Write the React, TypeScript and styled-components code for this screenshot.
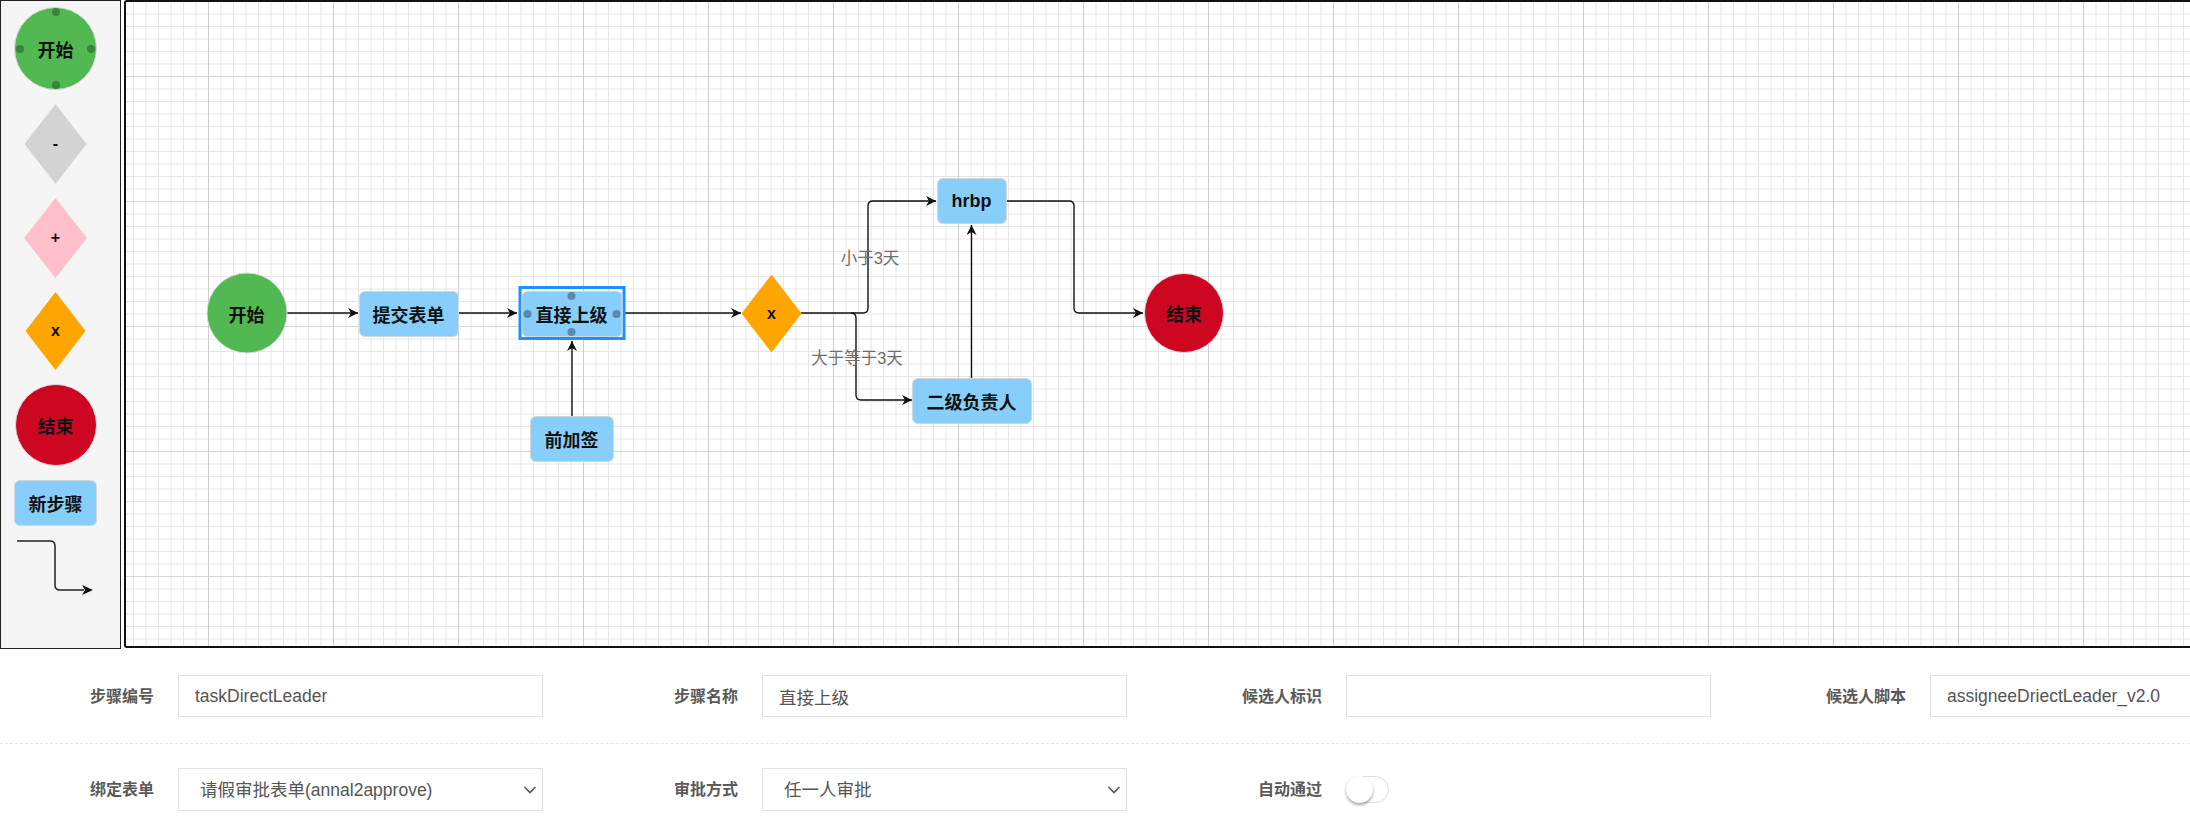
import styled, { createGlobalStyle } from "styled-components";

const GlobalStyle = createGlobalStyle`
  html, body {
    margin: 0;
    padding: 0;
    overflow: hidden;
    background: #fff;
  }
  body {
    font-family: "Liberation Sans", "Noto Sans CJK SC", sans-serif;
  }
  * {
    box-sizing: border-box;
  }
`;

// canvas padding box starts here in page coordinates
const ORIGIN_X = 126;
const ORIGIN_Y = 2;

const Page = styled.div`
  width: 2190px;
`;

const Workspace = styled.div`
  display: flex;
  gap: 3px;
  height: 649px;
  overflow: hidden;
`;

const Palette = styled.aside`
  flex: none;
  width: 121px;
  height: 649px;
  border: 1px solid #222;
  background: #f5f5f5;
  display: flex;
  flex-direction: column;
  align-items: center;
  gap: 14px;
  padding: 6px 23px 0 13px;
`;

const Canvas = styled.main`
  flex: none;
  position: relative;
  width: 2200px;
  height: 648px;
  border: 2px solid #111;
  border-radius: 3px;
  overflow: hidden;
  background-color: #fff;
  background-image: linear-gradient(to right, #cdcdcd 1px, transparent 1px),
    linear-gradient(to bottom, #d6d6d6 1px, transparent 1px),
    linear-gradient(to right, #e6e6e6 1px, transparent 1px),
    linear-gradient(to bottom, #e6e6e6 1px, transparent 1px);
  background-size: 125px 125px, 125px 125px, 12.5px 12.5px, 12.5px 12.5px;
  background-position: 82px 74px, 82px 74px, 7px 11.5px, 7px 11.5px;
`;

const Circle = styled.div<{ $color: string; $size: number }>`
  position: relative;
  flex: none;
  width: ${(p) => p.$size}px;
  height: ${(p) => p.$size}px;
  border-radius: 50%;
  background: ${(p) => p.$color};
  border: 1px solid #d8d8d8;
  display: flex;
  align-items: center;
  justify-content: center;
  font-size: 18px;
  font-weight: 700;
  color: #111;
`;

const Diamond = styled.div<{ $color: string; $w: number; $h: number }>`
  flex: none;
  width: ${(p) => p.$w}px;
  height: ${(p) => p.$h}px;
  background: ${(p) => p.$color};
  clip-path: polygon(50% 0, 100% 50%, 50% 100%, 0 50%);
  display: flex;
  align-items: center;
  justify-content: center;
  font-size: 16px;
  font-weight: 700;
  color: #111;
`;

const Step = styled.div`
  position: relative;
  flex: none;
  height: 46px;
  padding: 0 14px;
  border-radius: 6px;
  background: #87cefa;
  border: 1px solid #cfd8de;
  display: flex;
  align-items: center;
  justify-content: center;
  font-size: 18px;
  font-weight: 700;
  color: #111;
  white-space: nowrap;
`;

const Port = styled.span<{ $side: "top" | "bottom" | "left" | "right"; $color: string }>`
  position: absolute;
  width: 8px;
  height: 8px;
  border-radius: 50%;
  background: ${(p) => p.$color};
  ${(p) =>
    p.$side === "top"
      ? "top: 0px; left: 50%; transform: translateX(-50%);"
      : p.$side === "bottom"
      ? "bottom: 0px; left: 50%; transform: translateX(-50%);"
      : p.$side === "left"
      ? "left: 1px; top: 50%; transform: translateY(-50%);"
      : "right: 1px; top: 50%; transform: translateY(-50%);"}
`;

const Selection = styled.div`
  border: 3px solid #1e90ff;
  padding: 2px 0 0 0;
`;

const NodeSlot = styled.div<{ $x: number; $y: number }>`
  position: absolute;
  left: ${(p) => p.$x - ORIGIN_X}px;
  top: ${(p) => p.$y - ORIGIN_Y}px;
  transform: translate(-50%, -50%);
`;

const EdgeLabel = styled.div<{ $x: number; $y: number }>`
  position: absolute;
  left: ${(p) => p.$x - ORIGIN_X}px;
  top: ${(p) => p.$y - ORIGIN_Y}px;
  transform: translate(-50%, -50%);
  font-size: 16.5px;
  color: #6e6e6e;
  white-space: nowrap;
`;

const EdgeLayer = styled.svg`
  position: absolute;
  left: 0;
  top: 0;
  pointer-events: none;
`;

const Form = styled.section`
  width: 2190px;
`;

const FormRow = styled.div<{ $top: number; $bottom: number }>`
  display: grid;
  grid-template-columns: repeat(4, 584px);
  margin-left: -17px;
  padding: ${(p) => p.$top}px 0 ${(p) => p.$bottom}px;
`;

const Divider = styled.hr`
  margin: 0;
  border: none;
  border-top: 1px dashed #e6e6e6;
`;

const Field = styled.div`
  display: grid;
  grid-template-columns: 171px 365px;
  column-gap: 24px;
  align-items: center;
`;

const Label = styled.label`
  text-align: right;
  font-size: 16px;
  font-weight: 700;
  color: #5a5a5a;
  padding-bottom: 3px;
`;

const TextInput = styled.input`
  height: 42px;
  width: 100%;
  border: 1px solid #e3e3e3;
  border-radius: 0;
  padding: 0 16px;
  font-family: "Liberation Sans", "Noto Sans CJK SC", sans-serif;
  font-size: 17.5px;
  color: #555;
  outline: none;
  background: #fff;
`;

const SelectBox = styled.div`
  position: relative;
  height: 43px;
`;

const Select = styled.select`
  appearance: none;
  width: 100%;
  height: 100%;
  border: 1px solid #e3e3e3;
  border-radius: 0;
  padding: 0 30px 0 21px;
  font-family: "Liberation Sans", "Noto Sans CJK SC", sans-serif;
  font-size: 17.5px;
  color: #555;
  background: #fff;
  outline: none;
`;

const Chevron = styled.svg`
  position: absolute;
  right: 6px;
  top: 50%;
  transform: translateY(-50%);
  pointer-events: none;
`;

const Switch = styled.div`
  position: relative;
  width: 43px;
  height: 27px;
  border: 1px solid #dedede;
  border-radius: 14px;
  background: #fff;
`;

const Knob = styled.span`
  position: absolute;
  left: -1px;
  top: -1px;
  width: 27px;
  height: 27px;
  border-radius: 50%;
  background: #fff;
  box-shadow: 0 2px 3px rgba(0, 0, 0, 0.35);
`;

const ConnectorIcon = () => (
  <svg width="83" height="60" viewBox="0 0 83 60">
    <path d="M3 1 H36 Q41 1 41 6 V45 Q41 50 46 50 H70" fill="none" stroke="#222" strokeWidth="1.5" />
    <polygon points="79,50 68,45 71,50 68,55" fill="#111" />
  </svg>
);

const ChevronDown = () => (
  <Chevron width="14" height="9" viewBox="0 0 14 9">
    <polyline points="1.5,1.5 7,7 12.5,1.5" fill="none" stroke="#555" strokeWidth="1.6" />
  </Chevron>
);

const edges = [
  "M287 313 H358",
  "M458 313 H517",
  "M572 416 V341",
  "M625 313 H741",
  "M801 313 H863 Q868 313 868 308 V206 Q868 201 873 201 H936",
  "M851 313 Q856 313 856 318 V395 Q856 400 861 400 H912",
  "M971.5 378 V225",
  "M1006 201 H1069 Q1074 201 1074 206 V308 Q1074 313 1079 313 H1143",
];

const Edges = () => (
  <EdgeLayer width="2196" height="644" viewBox={`${ORIGIN_X} ${ORIGIN_Y} 2196 644`}>
    <defs>
      <marker
        id="arrow"
        viewBox="0 0 10 10"
        refX="10"
        refY="5"
        markerWidth="11"
        markerHeight="10"
        markerUnits="userSpaceOnUse"
        orient="auto"
      >
        <path d="M0,0 L10,5 L0,10 L3,5 z" fill="#111" />
      </marker>
    </defs>
    {edges.map((d) => (
      <path key={d} d={d} fill="none" stroke="#111" strokeWidth="1.4" markerEnd="url(#arrow)" />
    ))}
  </EdgeLayer>
);

const FlowCanvas = () => (
  <Canvas>
    <Edges />
    <NodeSlot $x={246.5} $y={313}>
      <Circle $color="#52b852" $size={81}>开始</Circle>
    </NodeSlot>
    <NodeSlot $x={408.5} $y={314}>
      <Step style={{ width: 100 }}>提交表单</Step>
    </NodeSlot>
    <NodeSlot $x={571.5} $y={313}>
      <Selection>
        <Step style={{ width: 101 }}>
          直接上级
          <Port $side="top" $color="rgba(70,110,140,0.7)" />
          <Port $side="bottom" $color="rgba(70,110,140,0.7)" />
          <Port $side="left" $color="rgba(70,110,140,0.7)" />
          <Port $side="right" $color="rgba(70,110,140,0.7)" />
        </Step>
      </Selection>
    </NodeSlot>
    <NodeSlot $x={571.5} $y={438.5}>
      <Step>前加签</Step>
    </NodeSlot>
    <NodeSlot $x={771.5} $y={313.5}>
      <Diamond $color="#ffa500" $w={60} $h={78}>x</Diamond>
    </NodeSlot>
    <NodeSlot $x={971.5} $y={201}>
      <Step>hrbp</Step>
    </NodeSlot>
    <NodeSlot $x={971.5} $y={401}>
      <Step>二级负责人</Step>
    </NodeSlot>
    <NodeSlot $x={1184} $y={313}>
      <Circle $color="#cd0621" $size={80}>结束</Circle>
    </NodeSlot>
    <EdgeLabel $x={870} $y={257}>小于3天</EdgeLabel>
    <EdgeLabel $x={857} $y={357}>大于等于3天</EdgeLabel>
  </Canvas>
);

const ShapePalette = () => (
  <Palette>
    <Circle $color="#52b852" $size={83}>
      开始
      <Port $side="top" $color="rgba(30,80,30,0.5)" />
      <Port $side="bottom" $color="rgba(30,80,30,0.5)" />
      <Port $side="left" $color="rgba(30,80,30,0.5)" />
      <Port $side="right" $color="rgba(30,80,30,0.5)" />
    </Circle>
    <Diamond $color="#d3d3d3" $w={62} $h={80}>-</Diamond>
    <Diamond $color="#ffc0cb" $w={63} $h={80}>+</Diamond>
    <Diamond $color="#ffa500" $w={60} $h={78}>x</Diamond>
    <Circle $color="#cd0621" $size={82}>结束</Circle>
    <Step style={{ width: 83 }}>新步骤</Step>
    <ConnectorIcon />
  </Palette>
);

export default function App() {
  return (
    <Page>
      <GlobalStyle />
      <Workspace>
        <ShapePalette />
        <FlowCanvas />
      </Workspace>
      <Form>
        <FormRow $top={26} $bottom={26}>
          <Field>
            <Label>步骤编号</Label>
            <TextInput defaultValue="taskDirectLeader" />
          </Field>
          <Field>
            <Label>步骤名称</Label>
            <TextInput defaultValue="直接上级" />
          </Field>
          <Field>
            <Label>候选人标识</Label>
            <TextInput defaultValue="" />
          </Field>
          <Field>
            <Label>候选人脚本</Label>
            <TextInput defaultValue="assigneeDriectLeader_v2.0" />
          </Field>
        </FormRow>
        <Divider />
        <FormRow $top={24} $bottom={10}>
          <Field>
            <Label>绑定表单</Label>
            <SelectBox>
              <Select defaultValue="annal2approve">
                <option value="annal2approve">请假审批表单(annal2approve)</option>
              </Select>
              <ChevronDown />
            </SelectBox>
          </Field>
          <Field>
            <Label>审批方式</Label>
            <SelectBox>
              <Select defaultValue="any">
                <option value="any">任一人审批</option>
              </Select>
              <ChevronDown />
            </SelectBox>
          </Field>
          <Field>
            <Label>自动通过</Label>
            <Switch>
              <Knob />
            </Switch>
          </Field>
        </FormRow>
      </Form>
    </Page>
  );
}
